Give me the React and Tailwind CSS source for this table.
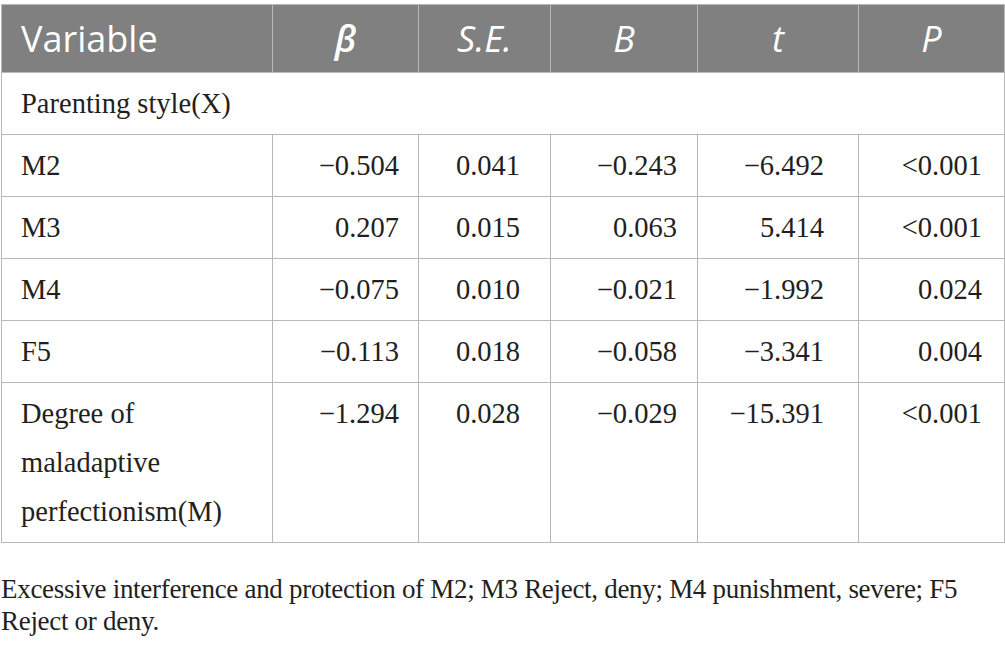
const rows = [
  { name: "M2", beta: "−0.504", se: "0.041", b: "−0.243", t: "−6.492", p: "<0.001" },
  { name: "M3", beta: "0.207", se: "0.015", b: "0.063", t: "5.414", p: "<0.001" },
  { name: "M4", beta: "−0.075", se: "0.010", b: "−0.021", t: "−1.992", p: "0.024" },
  { name: "F5", beta: "−0.113", se: "0.018", b: "−0.058", t: "−3.341", p: "0.004" },
];

const cell = "border border-[#b8b8b8] align-top py-[6px] leading-[49px]";

export default function App() {
  return (
    <div className="bg-white w-[1005px] h-[658px] pt-[4px] pl-[1px] text-[#231f20]">
      <table className="table-fixed border-collapse w-[1003px] font-['Liberation_Serif',serif] text-[28.5px]">
        <colgroup>
          <col className="w-[271px]" />
          <col className="w-[146px]" />
          <col className="w-[132px]" />
          <col className="w-[147px]" />
          <col className="w-[161px]" />
          <col className="w-[146px]" />
        </colgroup>
        <thead>
          <tr className="bg-[#808080] text-white font-['Open_Sans',sans-serif] text-[36px] h-[68px]">
            <th className="border border-[#b8b8b8] font-normal text-left pl-[19px]">Variable</th>
            <th className="border border-[#b8b8b8] font-semibold italic">β</th>
            <th className="border border-[#b8b8b8] font-normal italic">S.E.</th>
            <th className="border border-[#b8b8b8] font-normal italic">B</th>
            <th className="border border-[#b8b8b8] font-normal italic">t</th>
            <th className="border border-[#b8b8b8] font-normal italic">P</th>
          </tr>
        </thead>
        <tbody>
          <tr>
            <td colSpan={6} className={`${cell} pl-[19px]`}>Parenting style(X)</td>
          </tr>
          {rows.map((r) => (
            <tr key={r.name}>
              <td className={`${cell} pl-[19px]`}>{r.name}</td>
              <td className={`${cell} text-right pr-[19px]`}>{r.beta}</td>
              <td className={`${cell} text-right pr-[30px]`}>{r.se}</td>
              <td className={`${cell} text-right pr-[20px]`}>{r.b}</td>
              <td className={`${cell} text-right pr-[34px]`}>{r.t}</td>
              <td className={`${cell} text-right pr-[22px]`}>{r.p}</td>
            </tr>
          ))}
          <tr>
            <td className={`${cell} pl-[19px]`}>
              Degree of
              <br />
              maladaptive
              <br />
              perfectionism(M)
            </td>
            <td className={`${cell} text-right pr-[19px]`}>−1.294</td>
            <td className={`${cell} text-right pr-[30px]`}>0.028</td>
            <td className={`${cell} text-right pr-[20px]`}>−0.029</td>
            <td className={`${cell} text-right pr-[34px]`}>−15.391</td>
            <td className={`${cell} text-right pr-[22px]`}>{"<0.001"}</td>
          </tr>
        </tbody>
      </table>
      <p className="mt-[30px] font-['Liberation_Serif',serif] text-[27px] leading-[32px] tracking-[-0.3px] whitespace-nowrap">
        Excessive interference and protection of M2; M3 Reject, deny; M4 punishment, severe; F5
        <br />
        Reject or deny.
      </p>
    </div>
  );
}
